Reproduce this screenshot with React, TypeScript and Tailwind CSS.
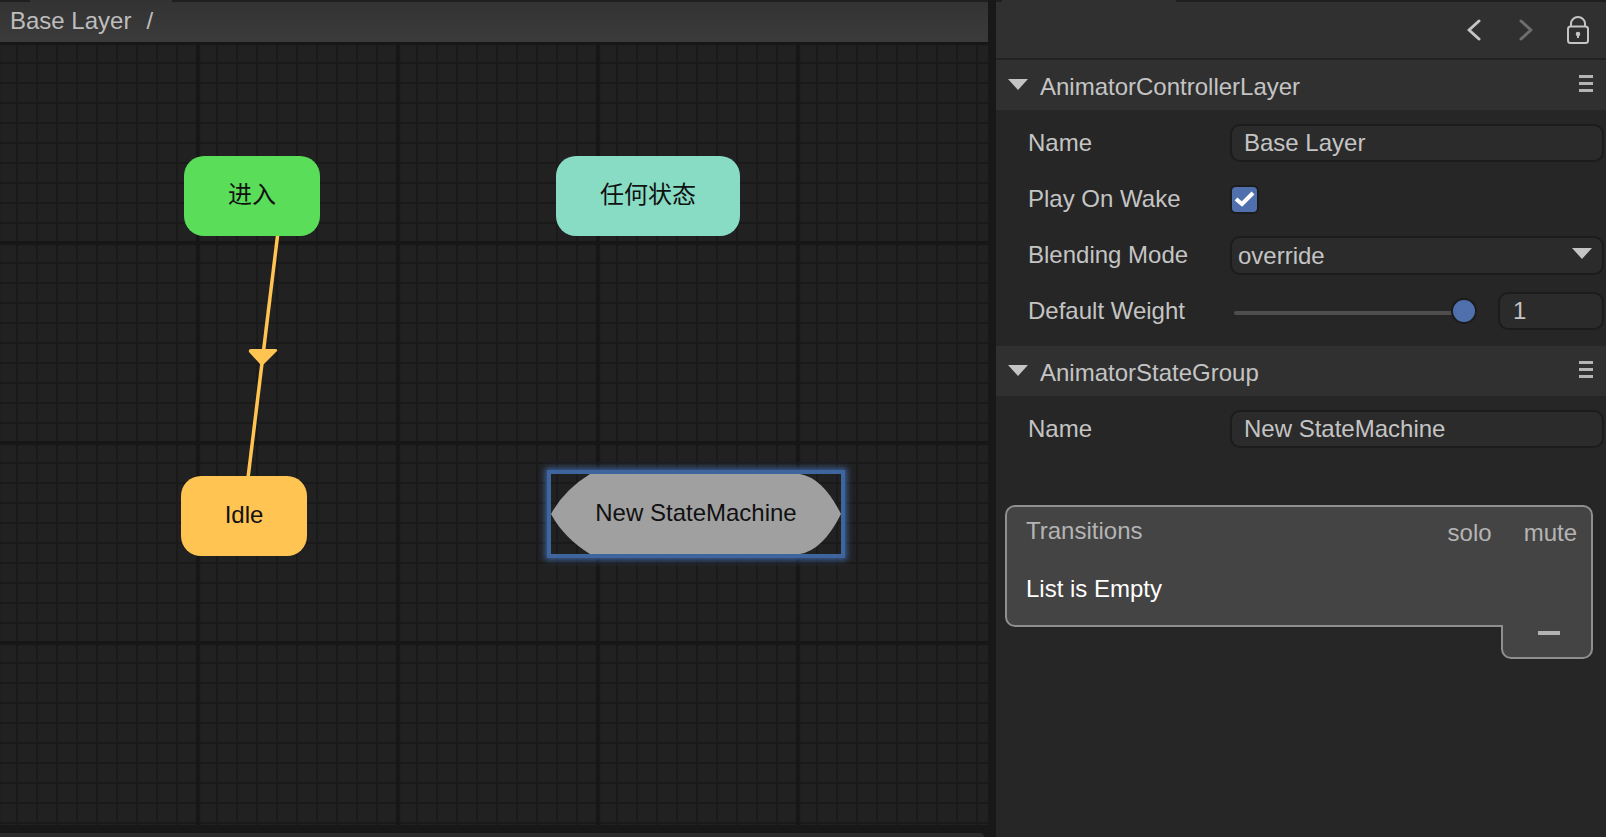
const FONT = "font-['Liberation_Sans','Noto_Sans_CJK_SC',sans-serif]";

function Triangle() {
  return <span className="block h-0 w-0 border-x-[10px] border-t-[11px] border-x-transparent border-t-[#c4c4c4]" />;
}

function MenuLines() {
  return (
    <span className="-mt-1 flex w-[14px] flex-col gap-[4px]">
      <span className="h-[3px] bg-[#b4b4b4]" />
      <span className="h-[3px] bg-[#b4b4b4]" />
      <span className="h-[3px] bg-[#b4b4b4]" />
    </span>
  );
}

function SectionHeader({ title }: { title: string }) {
  return (
    <div className="flex h-[50px] items-center bg-[#303030] pl-3 pr-[13px]">
      <span className="-mt-[2px] mr-[12px]">
        <Triangle />
      </span>
      <span className="flex-1 pt-[4px] text-[24px] text-[#c4c4c4]">{title}</span>
      <MenuLines />
    </div>
  );
}

function Row({ label, children }: { label: string; children: React.ReactNode }) {
  return (
    <div className="flex h-[56px] items-center pl-8 pr-[2px]">
      <span className="w-[202px] shrink-0 text-[24px] text-[#c4c4c4]">{label}</span>
      {children}
    </div>
  );
}

function TextBox({ value }: { value: string }) {
  return (
    <div className="flex h-[38px] flex-1 items-center rounded-[10px] border-2 border-[#1c1c1c] bg-[#2b2b2b] pl-[12px] text-[24px] text-[#c4c4c4]">
      {value}
    </div>
  );
}

function Node({ label, className }: { label: string; className: string }) {
  return (
    <div className={`absolute flex h-[80px] items-center justify-center rounded-[20px] pb-[2px] text-[24px] text-[#111111] ${className}`}>
      {label}
    </div>
  );
}

export default function App() {
  return (
    <div className={`flex h-[837px] w-[1606px] overflow-hidden bg-[#181818] ${FONT}`}>
      <div className="flex w-[988px] shrink-0 flex-col">
        <div className="flex h-[2px] shrink-0 bg-[#1f1f1f]">
          <span className="ml-[30px] w-[142px] bg-[#333333]" />
        </div>
        <div className="flex h-[40px] shrink-0 items-center gap-[15px] bg-gradient-to-b from-[#333333] to-[#3b3b3b] pb-[2px] pl-[10px] text-[24px] text-[#bdbdbd]">
          <span>Base Layer</span>
          <span>/</span>
        </div>
        <div className="relative h-[783px] overflow-hidden bg-[#212121] bg-[linear-gradient(to_right,#161616_3px,transparent_5px),linear-gradient(to_bottom,#161616_3px,transparent_5px),linear-gradient(to_right,#1a1a1a_2px,transparent_2px),linear-gradient(to_bottom,#1a1a1a_2px,transparent_2px)] bg-[size:200px_200px,200px_200px,20px_20px,20px_20px] bg-[position:-4px_-1px,-4px_-1px,-4px_0px,-4px_0px]">
          <svg className="absolute left-0 top-0" width="988" height="783">
            <line x1="278" y1="190" x2="248" y2="436" stroke="#ffc452" strokeWidth="3.5" />
            <path d="M251 307 H275 Q278 307 277 309 L264 322 L262 323 L260 322 L249 310 Q248 307 251 307 Z" fill="#ffc452" />
          </svg>
          <Node label="进入" className="left-[184px] top-[114px] w-[136px] bg-[#5ade5a]" />
          <Node label="任何状态" className="left-[556px] top-[114px] w-[184px] bg-[#88dcc4]" />
          <Node label="Idle" className="left-[181px] top-[434px] w-[126px] bg-[#ffc452]" />
          <div className="absolute left-[547px] top-[428px] h-[88px] w-[298px] border-4 border-[#3f659f] shadow-[0_0_6px_2px_#3c5f96]">
            <div className="flex h-full w-full items-center justify-center bg-[#a0a0a0] pb-[2px] text-[24px] text-[#111111] [clip-path:path('M0_40Q13_16_39_0H249Q272_4_290_40Q272_76_249_80H39Q13_64_0_40Z')]">
              New StateMachine
            </div>
          </div>
        </div>
        <div className="mt-[8px] h-[4px] w-[984px] rounded-tr-[4px] bg-[#2b2b2b]" />
      </div>

      <div className="ml-[8px] flex-1 bg-[#262626]">
        <div className="flex h-[2px] bg-[#1f1f1f]">
          <span className="ml-[6px] w-[174px] bg-[#303030]" />
        </div>
        <div className="flex h-[58px] items-center justify-end gap-[34px] border-b-2 border-[#222222] bg-[#303030] pr-[17px]">
          <div className="flex gap-[38px]">
            <svg width="14" height="22" viewBox="0 0 14 22" fill="none" stroke="#c4c4c4" strokeWidth="3" strokeLinecap="round" strokeLinejoin="round">
              <path d="M12 2 L2 11 L12 20" />
            </svg>
            <svg width="14" height="22" viewBox="0 0 14 22" fill="none" stroke="#6e6e6e" strokeWidth="3" strokeLinecap="round" strokeLinejoin="round">
              <path d="M2 2 L12 11 L2 20" />
            </svg>
          </div>
          <svg width="22" height="28" viewBox="0 0 22 28" fill="none" stroke="#c4c4c4" strokeWidth="2">
            <rect x="1" y="10.5" width="20" height="16.5" rx="2.5" />
            <path d="M4 10.5V7.5a7 6.5 0 0 1 14 0v3" />
            <path d="M11 18v4" />
            <circle cx="11" cy="18" r="1.3" fill="#c4c4c4" />
          </svg>
        </div>
        <SectionHeader title="AnimatorControllerLayer" />
        <div className="pt-[5px]">
          <Row label="Name">
            <TextBox value="Base Layer" />
          </Row>
          <Row label="Play On Wake">
            <div className="flex h-[29px] w-[29px] items-center justify-center rounded-[6px] border-2 border-[#1c1c1c] bg-[#4f70ad]">
              <svg width="21" height="16" viewBox="0 0 21 16" fill="none" stroke="white" strokeWidth="4">
                <path d="M2 8 L8 13 L19 2" />
              </svg>
            </div>
          </Row>
          <Row label="Blending Mode">
            <div className="flex h-[39px] flex-1 items-center justify-between rounded-[10px] border-2 border-[#1c1c1c] bg-[#2b2b2b] pl-[6px] pr-[10px] text-[24px] text-[#c4c4c4]">
              <span className="pt-[2px]">override</span>
              <span className="-mt-[3px]">
                <Triangle />
              </span>
            </div>
          </Row>
          <Row label="Default Weight">
            <div className="relative ml-[4px] mr-[21px] mt-[4px] h-[4px] w-[243px] rounded-full bg-[#4e4e4e]">
              <span className="absolute -top-[13px] right-0 h-[26px] w-[26px] rounded-full border-2 border-[#1c1c1c] bg-[#4f70ad]" />
            </div>
            <div className="flex h-[38px] flex-1 items-center rounded-[10px] border-2 border-[#1c1c1c] bg-[#2b2b2b] pl-[13px] text-[24px] text-[#c4c4c4]">
              1
            </div>
          </Row>
        </div>
        <div className="mt-[7px]">
          <SectionHeader title="AnimatorStateGroup" />
        </div>
        <div className="pt-[5px]">
          <Row label="Name">
            <TextBox value="New StateMachine" />
          </Row>
        </div>
        <div className="relative ml-[9px] mt-[48px] h-[154px] w-[588px]">
          <div className="h-[122px] rounded-[10px] rounded-br-none border-2 border-[#8f8f8f] bg-[#444444] px-[19px] pt-[9px] text-[24px] leading-[30px]">
            <div className="flex">
              <span className="flex-1 text-[#b4b4b4]">Transitions</span>
              <span className="mt-[2px] text-[#b4b4b4]">solo</span>
              <span className="ml-[32px] mr-[-5px] mt-[2px] text-[#b4b4b4]">mute</span>
            </div>
            <div className="mt-[26px] text-white">List is Empty</div>
          </div>
          <div className="absolute right-0 top-[120px] flex h-[34px] w-[92px] items-start justify-center rounded-b-[10px] border-2 border-t-0 border-[#8f8f8f] bg-[#444444] pl-[3px] pt-[6px]">
            <span className="h-[4px] w-[22px] bg-[#b4b4b4]" />
          </div>
        </div>
      </div>
    </div>
  );
}
